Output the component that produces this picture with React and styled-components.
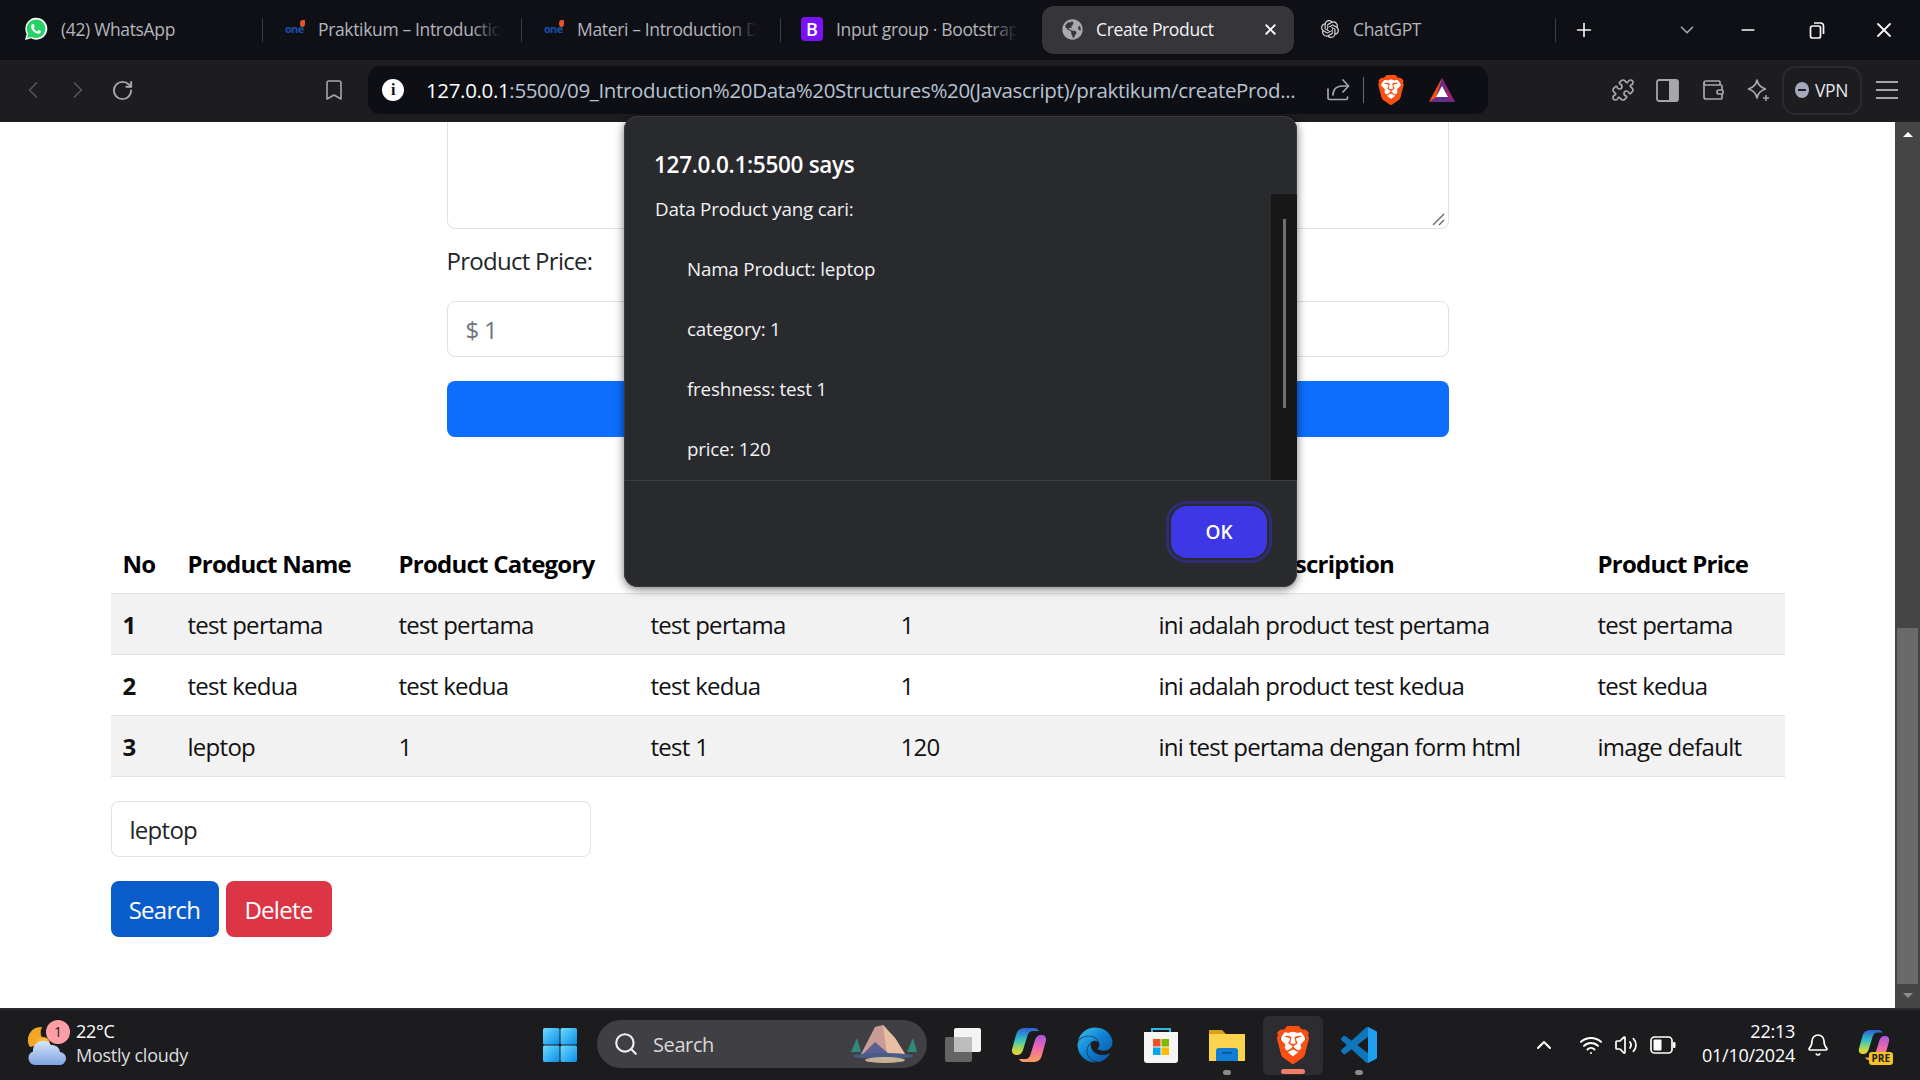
import React from 'react';
import styled, { createGlobalStyle } from 'styled-components';
import {
  ChevronLeft, ChevronRight, RotateCw, Bookmark, Puzzle, Wallet, Plus, ChevronDown,
  Minus, X, Search as SearchIcon, ChevronUp, Wifi, Volume2, Bell,
} from 'lucide-react';
import { FaGlobeAmericas, FaEdge } from 'react-icons/fa';
import { SiOpenai, SiBrave } from 'react-icons/si';

const SANS = '"Open Sans", "Noto Sans", "Liberation Sans", sans-serif';

const Global = createGlobalStyle`
  html, body { margin: 0; padding: 0; width: 1920px; height: 1080px; overflow: hidden; background: #fff; }
  * { box-sizing: border-box; }
  body { font-family: ${SANS}; }
`;

const Root = styled.div`
  position: relative;
  width: 1920px;
  height: 1080px;
  display: flex;
  flex-direction: column;
  overflow: hidden;
`;
const HiddenDefs = styled.svg`
  position: absolute;
  width: 0;
  height: 0;
`;

/* ---------- tab strip ---------- */
const TabStrip = styled.div`
  height: 60px;
  background: #0f1016;
  display: flex;
  align-items: center;
  padding-left: 4px;
  color: #b4b5bb;
  font-size: 17.5px;
  letter-spacing: -0.35px;
`;
const Tab = styled.div`
  flex: 0 0 ${p => p.$w}px;
  height: 44px;
  padding-bottom: 2px;
  display: flex;
  align-items: center;
  gap: ${p => p.$gap || 13}px;
  padding-left: 20px;
  white-space: nowrap;
  svg { flex: none; }
`;
const TabSep = styled.span`
  flex: 0 0 1px;
  height: 24px;
  background: #3c3d42;
`;
const FadedLabel = styled.span`
  position: relative;
  &::after {
    content: '';
    position: absolute;
    right: 0;
    top: 0;
    bottom: 0;
    width: 30px;
    background: linear-gradient(90deg, rgba(15,16,22,0), #0f1016 95%);
  }
`;
const ActiveTab = styled.div`
  flex: 0 0 252px;
  height: 48px;
  margin: 0 7px 0 3px;
  padding: 0 15px 2px 20px;
  background: #35353a;
  border-radius: 12px;
  display: flex;
  align-items: center;
  gap: 13px;
  color: #f3f3f5;
`;
const ActiveLabel = styled.span`
  flex: 1;
`;
const CloseGlyph = styled(X)`
  width: 17px;
  height: 17px;
  color: #fff;
  stroke-width: 2.5;
`;
const OneLogo = styled.span`
  position: relative;
  flex: 0 0 22px;
  padding-left: 2px;
  font: 700 11px/12px ${SANS};
  letter-spacing: -0.7px;
  color: #1c4fa8;
  &::after {
    content: '';
    position: absolute;
    top: -3px;
    right: 0;
    width: 5px;
    height: 7px;
    background: #e8532a;
    border-radius: 50% 10% 50% 50%;
  }
`;
const BootstrapLogo = styled.span`
  flex: 0 0 22px;
  height: 24px;
  border-radius: 4px;
  background: #7b12f5;
  color: #fff;
  font: 600 18px/24px ${SANS};
  text-align: center;
  letter-spacing: 0;
`;
const GptLogo = styled.span`
  flex: 0 0 18px;
  display: flex;
  color: #d8d8da;
`;
const WindowControls = styled.div`
  display: flex;
  align-items: center;
  color: #f2f2f2;
`;
const StripButton = styled.span`
  width: ${p => p.$w}px;
  margin-left: ${p => p.$ml || 0}px;
  display: flex;
  justify-content: center;
  color: ${p => p.$c || '#f5f5f5'};
`;

/* ---------- tool bar ---------- */
const ToolBar = styled.div`
  height: 62px;
  padding: 0 0 2px 11px;
  background: #1c1c21;
  display: flex;
  align-items: center;
  color: #a6a7ad;
`;
const NavButton = styled.span`
  flex: 0 0 ${p => p.$w}px;
  display: flex;
  justify-content: center;
  color: ${p => p.$c || '#a6a7ad'};
`;
const BookmarkSlot = styled.span`
  flex: 0 0 209px;
  display: flex;
  justify-content: flex-end;
  padding-right: 7px;
`;
const AddressBar = styled.div`
  flex: 0 0 1120px;
  height: 48px;
  margin-left: 15px;
  padding-left: 14px;
  background: #0e0f14;
  border-radius: 12px;
  display: flex;
  align-items: center;
  color: #b6c3d2;
  font-size: 20.5px;
  letter-spacing: -0.35px;
  white-space: nowrap;
`;
const InfoDot = styled.span`
  flex: 0 0 22px;
  height: 22px;
  margin-right: 22px;
  border-radius: 50%;
  background: #fff;
  color: #0e0f14;
  font: 700 16px/22px "Liberation Serif", serif;
  text-align: center;
`;
const Host = styled.span`
  color: #fff;
`;
const Url = styled.span`
  flex: 0 0 896px;
`;
const AddrSep = styled.span`
  flex: 0 0 1px;
  height: 26px;
  margin: 0 12px 0 9px;
  background: #6a6b70;
`;
const BraveMark = styled.span`
  position: relative;
  flex: 0 0 ${p => p.$s}px;
  width: ${p => p.$s}px;
  height: ${p => p.$s}px;
  display: flex;
  color: #fb4f14;
  &::before {
    content: '';
    position: absolute;
    inset: 14% 18% 16%;
    background: #fff;
    border-radius: 30%;
  }
  svg { position: relative; }
`;
const Extensions = styled.div`
  display: flex;
  align-items: center;
  margin-left: 112px;
`;
const VpnPill = styled.span`
  flex: 0 0 80px;
  height: 49px;
  margin-left: 2px;
  padding-left: 11px;
  border: 2px solid #2b2c31;
  border-radius: 14px;
  display: flex;
  align-items: center;
  gap: 6px;
  color: #e8e8ea;
  font-size: 17.5px;
  letter-spacing: -0.4px;
`;
const VpnDot = styled.span`
  position: relative;
  width: 14px;
  height: 16px;
  border-radius: 50%;
  background: #a5a8bb;
  &::after {
    content: '';
    position: absolute;
    left: 3px;
    right: 3px;
    top: 7px;
    height: 2px;
    background: #1c1c21;
  }
`;

/* ---------- page ---------- */
const Viewport = styled.div`
  flex: 0 0 886px;
  display: flex;
  overflow: hidden;
`;
const Page = styled.main`
  flex: 1;
  background: #fff;
  color: #212529;
  font-size: 24px;
  letter-spacing: -0.72px;
  overflow: hidden;
`;
const Form = styled.div`
  width: 1002px;
  margin: 0 auto;
`;
const ClippedArea = styled.div`
  position: relative;
  height: 107px;
  border: 1px solid #dee2e6;
  border-top: 0;
  border-radius: 0 0 8px 8px;
`;
const ResizeGrip = styled.svg`
  position: absolute;
  right: 2px;
  bottom: 2px;
  width: 14px;
  height: 14px;
`;
const Label = styled.div`
  margin-top: 15px;
  height: 36px;
  line-height: 34px;
`;
const Field = styled.div`
  height: 56px;
  margin-top: ${p => p.$mt}px;
  width: ${p => p.$w || '100%'};
  border: 1px solid #dee2e6;
  border-radius: 8px;
  padding: 0 18px;
  line-height: 56px;
  color: ${p => p.$c || '#212529'};
`;
const SubmitBar = styled.div`
  height: 56px;
  margin-top: 24px;
  background: #0d6efd;
  border-radius: 8px;
`;
const Lower = styled.section`
  width: 1674px;
  margin: 95px auto 0;
`;
const Table = styled.table`
  width: 1674px;
  table-layout: fixed;
  border-collapse: collapse;
`;
const Th = styled.th`
  height: 61px;
  padding: 2px 12px 0;
  text-align: left;
  font-weight: 700;
  letter-spacing: -0.76px;
  color: #000;
  border-bottom: 1px solid #dee2e6;
  white-space: nowrap;
`;
const Row = styled.tr`
  background: ${p => (p.$odd ? '#f2f2f2' : '#fff')};
`;
const Td = styled.td`
  height: 61px;
  padding: 2px 12px 0;
  color: #111;
  font-weight: ${p => (p.$b ? 700 : 400)};
  border-bottom: 1px solid #dee2e6;
  white-space: nowrap;
`;
const ActionRow = styled.div`
  display: flex;
  gap: 7px;
  margin-top: 24px;
`;
const ActionButton = styled.div`
  width: ${p => p.$w}px;
  height: 56px;
  background: ${p => p.$bg};
  border-radius: 8px;
  color: #fff;
  text-align: center;
  line-height: 58px;
`;

/* ---------- page scrollbar ---------- */
const ScrollTrack = styled.div`
  flex: 0 0 25px;
  background: #454545;
  display: flex;
  flex-direction: column;
  align-items: center;
  padding: 0 2px;
`;
const Arrow = styled.span`
  margin-top: ${p => p.$mt}px;
  width: 0;
  height: 0;
  border-left: 5px solid transparent;
  border-right: 5px solid transparent;
  ${p => (p.$down ? `border-top: 5px solid #8e8e8e;` : `border-bottom: 5px solid #fff;`)}
`;
const ScrollThumb = styled.div`
  width: 21px;
  height: 356px;
  margin-top: ${p => p.$mt}px;
  background: #6a6a6a;
`;

/* ---------- alert dialog ---------- */
const Dialog = styled.div`
  position: absolute;
  left: 624px;
  top: 116px;
  width: 673px;
  height: 471px;
  background: #292a2d;
  border-radius: 14px;
  box-shadow: 0 2px 10px rgba(0,0,0,.55), 0 0 0 1px #3a3b3f inset;
  color: #f2f2f4;
  display: flex;
  flex-direction: column;
  overflow: hidden;
`;
const DialogTitle = styled.div`
  flex: 0 0 78px;
  padding: 34px 0 0 30px;
  font-size: 22.5px;
  line-height: 30px;
  font-weight: 600;
  letter-spacing: -0.3px;
  color: #fff;
`;
const DialogBody = styled.div`
  flex: 0 0 286px;
  min-height: 0;
  display: flex;
  overflow: hidden;
`;
const Message = styled.div`
  flex: 1;
  padding-left: 31px;
  font-size: 18.8px;
  letter-spacing: -0.2px;
`;
const Line = styled.div`
  height: 60px;
  line-height: 30px;
  padding-left: ${p => (p.$in ? 32 : 0)}px;
`;
const DialogScroll = styled.div`
  flex: 0 0 26px;
  background: #181818;
  display: flex;
  justify-content: center;
  padding-top: 25px;
`;
const DialogThumb = styled.div`
  width: 3px;
  height: 189px;
  background: #6f6f6f;
`;
const DialogFooter = styled.div`
  flex: 1;
  border-top: 1px solid #3c3d41;
  display: flex;
  justify-content: flex-end;
  align-items: center;
  padding: 0 30px 4px 0;
`;
const OkButton = styled.div`
  width: 96px;
  height: 52px;
  background: #3d37e6;
  border-radius: 16px;
  box-shadow: 0 0 0 2px #292a2d, 0 0 0 5px #2f2e75;
  color: #fff;
  font-weight: 600;
  font-size: 19px;
  text-align: center;
  line-height: 52px;
`;

/* ---------- taskbar ---------- */
const TaskBar = styled.footer`
  flex: 0 0 72px;
  background: #1c1c1f;
  border-top: 2px solid #2c2c2e;
  display: flex;
  align-items: center;
  color: #fff;
  font-size: 18px;
  letter-spacing: -0.25px;
`;
const Weather = styled.div`
  position: relative;
  flex: 0 0 527px;
  display: flex;
  align-items: center;
  padding-left: 28px;
  gap: 10px;
  svg { flex: none; }
`;
const WeatherBadge = styled.span`
  position: absolute;
  left: 46px;
  top: -3px;
  width: 24px;
  height: 24px;
  border-radius: 50%;
  background: #ff9ea6;
  color: #222;
  font-size: 14px;
  line-height: 24px;
  text-align: center;
`;
const WeatherText = styled.div`
  line-height: 24px;
  margin-top: -4px;
`;
const Dim = styled.div`
  color: #dedede;
`;
const Slot = styled.div`
  position: relative;
  flex: 0 0 66px;
  height: 59px;
  display: flex;
  align-items: center;
  justify-content: center;
  ${p => p.$active && `
    &::before {
      content: '';
      position: absolute;
      inset: 0 3px;
      background: #2d2d31;
      border-radius: 6px;
    }
  `}
`;
const Dot = styled.span`
  position: absolute;
  left: 50%;
  bottom: ${p => (p.$wide ? 1 : 0)}px;
  width: ${p => (p.$wide ? 24 : 8)}px;
  height: 5px;
  margin-left: ${p => (p.$wide ? -12 : -4)}px;
  border-radius: 3px;
  background: ${p => (p.$wide ? '#f47c6a' : '#8a8a8a')};
`;
const SearchPill = styled.div`
  flex: 0 0 330px;
  height: 48px;
  margin: -2px 3px 0 4px;
  padding: 0 6px 0 16px;
  background: #3f3f44;
  border-radius: 24px;
  display: flex;
  align-items: center;
  gap: 14px;
  color: #d9d9d9;
  font-size: 20px;
  letter-spacing: -0.4px;
`;
const SearchText = styled.span`
  flex: 1;
`;
const Tray = styled.div`
  flex: 1;
  display: flex;
  align-items: center;
  padding-left: 135px;
`;
const TrayIcon = styled.span`
  position: relative;
  flex: 0 0 ${p => p.$w}px;
  margin-left: ${p => p.$ml || 0}px;
  display: flex;
  justify-content: center;
`;
const PreBadge = styled.span`
  position: absolute;
  right: 14px;
  bottom: -4px;
  padding: 0 3px;
  border-radius: 3px;
  background: #f7c325;
  color: #222;
  font: 700 10px/13px ${SANS};
  letter-spacing: 0;
`;
const Clock = styled.div`
  flex: 0 0 104px;
  margin: -4px 0 0 6px;
  text-align: right;
  line-height: 24px;
`;

/* ---------- drawings ---------- */
const WhatsAppIcon = () => (
  <svg width="24" height="24" viewBox="0 0 24 24">
    <path fill="#fff" d="M1 23l1.7-6A11 11 0 1 1 7 21.3z" />
    <path fill="#25d366" d="M3 21l1.2-4.3a9.3 9.3 0 1 1 3.4 3.2z" />
    <path fill="#fff" d="M9 7c-.4 0-.9.2-1.2.6-.5.6-.9 1.3-.8 2.3.2 1.5 1.2 3.1 2.7 4.5 1.5 1.3 3 2.2 4.4 2.3 1 .1 1.8-.3 2.4-1 .3-.4.5-1 .4-1.4l-2.3-1.2-1.1 1.3c-1.6-.6-3-1.9-3.8-3.5l1-1.2L9.7 7z" />
  </svg>
);
const Grip = () => (
  <ResizeGrip viewBox="0 0 14 14">
    <path d="M1 13 12 2M7 13l5-5" stroke="#666" strokeWidth="1.4" fill="none" />
  </ResizeGrip>
);
const ShareIcon = () => (
  <svg width="24" height="24" viewBox="0 0 24 24" fill="none" stroke="#a6a7ad" strokeWidth="1.7" strokeLinecap="round" strokeLinejoin="round">
    <path d="M2 11v9a1.500 1.500 0 0 0 1.500 1.500H20a1.500 1.500 0 0 0 1.500-1.500v-1" />
    <path d="M7 17c0-6 4-9 10-9h5" />
    <path d="M17 2l5.500 6L17 14" />
  </svg>
);
const BatIcon = () => (
  <svg width="28" height="26" viewBox="0 0 28 26">
    <polygon points="14,1 1,25 27,25" fill="#662d91" />
    <polygon points="14,1 1,25 8,20" fill="#ff5000" />
    <polygon points="14,1 27,25 20,20" fill="#9e1f63" />
    <polygon points="14,9 8,20 20,20" fill="#fff" />
  </svg>
);
const SidebarIcon = () => (
  <svg width="23" height="23" viewBox="0 0 23 23">
    <rect x="1" y="1" width="21" height="21" rx="2" fill="none" stroke="#a6a7ad" strokeWidth="1.8" />
    <rect x="13" y="1" width="9" height="21" fill="#a6a7ad" />
  </svg>
);
const LeoIcon = () => (
  <svg width="24" height="24" viewBox="0 0 24 24" fill="none" stroke="#a6a7ad" strokeWidth="1.7" strokeLinejoin="round">
    <path d="M11 2c1 5 3.500 7.500 8.500 9-5 1.500-7.500 4-8.500 9-1-5-3.500-7.500-8.500-9 5-1.500 7.500-4 8.500-9z" />
    <path d="M20 17v6M17 20h6" strokeWidth="1.500" />
  </svg>
);
const MenuIcon = () => (
  <svg width="22" height="20" viewBox="0 0 22 20">
    <path d="M0 2h22M0 10h22M0 18h22" stroke="#a6a7ad" strokeWidth="2" />
  </svg>
);
const RestoreIcon = () => (
  <svg width="16" height="17" viewBox="0 0 16 17" fill="none" stroke="#f5f5f5" strokeWidth="1.700">
    <rect x="1.500" y="4" width="10" height="12" rx="2" />
    <path d="M5 1h6.500a3 3 0 0 1 3 3v8" />
  </svg>
);
const WindowsIcon = () => (
  <svg width="36" height="36" viewBox="0 0 36 36">
    <defs>
      <linearGradient id="winGrad" x1="0" y1="0" x2="1" y2="1">
        <stop offset="0" stopColor="#6ddcff" />
        <stop offset="1" stopColor="#0a8de8" />
      </linearGradient>
    </defs>
    <rect x="1" y="1" width="16.500" height="16.500" rx="1.500" fill="url(#winGrad)" />
    <rect x="18.500" y="1" width="16.500" height="16.500" rx="1.500" fill="url(#winGrad)" />
    <rect x="1" y="18.500" width="16.500" height="16.500" rx="1.500" fill="url(#winGrad)" />
    <rect x="18.500" y="18.500" width="16.500" height="16.500" rx="1.500" fill="url(#winGrad)" />
  </svg>
);
const WeatherIcon = () => (
  <svg width="38" height="44" viewBox="0 0 38 44">
    <defs>
      <linearGradient id="cloudGrad" x1="0" y1="0" x2="0" y2="1">
        <stop offset="0" stopColor="#d6e5fa" />
        <stop offset="1" stopColor="#7fa3e0" />
      </linearGradient>
    </defs>
    <path d="M14 4a12 12 0 0 0 5 16L2 24A13 13 0 0 1 14 4z" fill="#f5a623" />
    <circle cx="15" cy="21" r="7" fill="#f9b53a" />
    <path fill="url(#cloudGrad)" d="M7 42a7 7 0 0 1-2-13.500A10 10 0 0 1 23 22a8 8 0 0 1 9 7A6.500 6.500 0 0 1 31 42z" />
  </svg>
);
const MountainIcon = () => (
  <svg width="76" height="40" viewBox="0 0 76 40">
    <polygon points="6,28 12,14 16,28" fill="#2e8b7a" />
    <polygon points="62,28 68,14 72,28" fill="#2e8b7a" />
    <polygon points="16,30 30,3 38,1 50,14 60,30" fill="#c99c96" />
    <polygon points="38,1 50,14 60,30 42,30" fill="#e8bfa2" />
    <polygon points="18,30 30,18 44,30" fill="#5b5f92" />
    <ellipse cx="38" cy="32" rx="30" ry="3" fill="#4a5c86" />
    <ellipse cx="40" cy="36" rx="20" ry="3" fill="#e8cfa8" opacity=".8" />
  </svg>
);
const TaskViewIcon = () => (
  <svg width="38" height="36" viewBox="0 0 38 36">
    <rect x="10" y="1" width="27" height="24" rx="2" fill="#f4f4f4" />
    <rect x="1" y="10" width="27" height="25" rx="2" fill="#6a6a6a" opacity=".92" />
    <rect x="10" y="10" width="18" height="15" fill="#bdbdbd" />
  </svg>
);
const CopilotIcon = ({ s = 36, id = 'co' }) => (
  <svg width={s} height={s} viewBox="0 0 36 36">
    <defs>
      <linearGradient id={`${id}A`} x1="0" y1="0" x2="0" y2="1">
        <stop offset="0" stopColor="#2b5fd8" />
        <stop offset=".45" stopColor="#35c4c0" />
        <stop offset=".8" stopColor="#b8d84a" />
        <stop offset="1" stopColor="#f0d23c" />
      </linearGradient>
      <linearGradient id={`${id}B`} x1="0" y1="1" x2="0" y2="0">
        <stop offset="0" stopColor="#f7a05a" />
        <stop offset=".5" stopColor="#f06aa8" />
        <stop offset="1" stopColor="#a855e0" />
      </linearGradient>
    </defs>
    <path fill={`url(#${id}A)`} d="M14 1h9c2.500 0 4 1 5 3h-6c-3 0-4.500 1.500-5.500 4.500L12 23c-1 3-3 5-6 5H5c-3 0-4.500-2.500-4-5.500L5 8C6 3.500 9 1 14 1z" />
    <path fill={`url(#${id}B)`} d="M22 35h-9c-2.500 0-4-1-5-3h6c3 0 4.500-1.500 5.500-4.500L24 13c1-3 3-5 6-5h1c3 0 4.500 2.500 4 5.500L31 28c-1 4.500-4 7-9 7z" />
  </svg>
);
const StoreIcon = () => (
  <svg width="36" height="38" viewBox="0 0 36 38">
    <path d="M9 8V3h18v5" fill="none" stroke="#35b4e8" strokeWidth="2" />
    <path d="M1 6h34v28a3 3 0 0 1-3 3H4a3 3 0 0 1-3-3z" fill="#f5f5f5" />
    <rect x="10" y="13" width="7.500" height="7.500" fill="#f25022" />
    <rect x="18.500" y="13" width="7.500" height="7.500" fill="#7fba00" />
    <rect x="10" y="21.500" width="7.500" height="7.500" fill="#00a4ef" />
    <rect x="18.500" y="21.500" width="7.500" height="7.500" fill="#ffb900" />
  </svg>
);
const FolderIcon = () => (
  <svg width="38" height="34" viewBox="0 0 38 34">
    <path d="M1 2h13l4 4h19v6H1z" fill="#d99f17" />
    <path d="M1 6h36v27H1z" fill="#fcd34d" />
    <path d="M8 23a3 3 0 0 1 3-3h16a3 3 0 0 1 3 3v10H8z" fill="#0f7ed4" />
    <rect x="14" y="24" width="10" height="1.600" fill="#08508f" />
  </svg>
);
const VsCodeIcon = () => (
  <svg width="36" height="36" viewBox="0 0 100 100">
    <path fill="#0f76bb" d="M96.460 10.800 75.860.9a6.230 6.230 0 0 0-7.100 1.200L29.300 38.100 12.100 25.100a4.160 4.160 0 0 0-5.300.2l-5.500 5a4.160 4.160 0 0 0 0 6.200L16.200 50 1.300 63.500a4.160 4.160 0 0 0 0 6.200l5.500 5a4.160 4.160 0 0 0 5.300.2l17.200-13 39.400 36a6.230 6.230 0 0 0 7.100 1.200l20.600-9.900a6.240 6.240 0 0 0 3.500-5.600V16.400a6.240 6.240 0 0 0-3.500-5.600zM75 72.700 45.100 50 75 27.300z" />
    <path fill="#1fa0ef" d="M75 0 96.500 10.800A6.240 6.240 0 0 1 100 16.400v67.200a6.240 6.240 0 0 1-3.500 5.600L75 100z" />
  </svg>
);
const BatteryIcon = () => (
  <svg width="26" height="18" viewBox="0 0 26 18">
    <rect x="1" y="1" width="21" height="16" rx="3.500" fill="none" stroke="#fff" strokeWidth="1.700" />
    <rect x="3.500" y="3.500" width="8" height="11" rx="1" fill="#fff" />
    <rect x="23" y="6" width="2.500" height="6" rx="1" fill="#fff" />
  </svg>
);

const HEAD = ['No', 'Product Name', 'Product Category', 'Product Freshness', 'Random Number', 'Products Description', 'Product Price'];
const COLS = [65, 211, 252, 250, 258, 439, 199];
const ROWS = [
  ['1', 'test pertama', 'test pertama', 'test pertama', '1', 'ini adalah product test pertama', 'test pertama'],
  ['2', 'test kedua', 'test kedua', 'test kedua', '1', 'ini adalah product test kedua', 'test kedua'],
  ['3', 'leptop', '1', 'test 1', '120', 'ini test pertama dengan form html', 'image default'],
];

export default function App() {
  return (
    <Root>
      <Global />
      <HiddenDefs>
        <defs>
          <linearGradient id="edgeGrad" x1="0" y1="0" x2="1" y2="1">
            <stop offset="0" stopColor="#35c1f1" />
            <stop offset=".5" stopColor="#0f7fd0" />
            <stop offset="1" stopColor="#0c4f9e" />
          </linearGradient>
        </defs>
      </HiddenDefs>

      <TabStrip>
        <Tab $w={258}><WhatsAppIcon /><span>(42) WhatsApp</span></Tab>
        <TabSep />
        <Tab $w={258}><OneLogo>one</OneLogo><FadedLabel>Praktikum – Introductio</FadedLabel></Tab>
        <TabSep />
        <Tab $w={258}><OneLogo>one</OneLogo><FadedLabel>Materi – Introduction D</FadedLabel></Tab>
        <TabSep />
        <Tab $w={258}><BootstrapLogo>B</BootstrapLogo><FadedLabel>Input group · Bootstrap</FadedLabel></Tab>
        <ActiveTab>
          <FaGlobeAmericas size={21} color="#a9a9ae" />
          <ActiveLabel>Create Product</ActiveLabel>
          <CloseGlyph />
        </ActiveTab>
        <Tab $w={254} $gap={14}><GptLogo><SiOpenai size={18} /></GptLogo><span>ChatGPT</span></Tab>
        <TabSep />
        <WindowControls>
          <StripButton $w={56}><Plus size={22} strokeWidth={1.8} /></StripButton>
          <StripButton $w={50} $ml={50} $c="#a6a7ad"><ChevronDown size={22} strokeWidth={1.8} /></StripButton>
          <StripButton $w={72}><Minus size={20} strokeWidth={2} /></StripButton>
          <StripButton $w={66}><RestoreIcon /></StripButton>
          <StripButton $w={68}><X size={24} strokeWidth={1.8} /></StripButton>
        </WindowControls>
      </TabStrip>

      <ToolBar>
        <NavButton $w={44} $c="#55565c"><ChevronLeft size={28} strokeWidth={1.5} /></NavButton>
        <NavButton $w={45} $c="#55565c"><ChevronRight size={28} strokeWidth={1.5} /></NavButton>
        <NavButton $w={44}><RotateCw size={23} strokeWidth={2} /></NavButton>
        <BookmarkSlot><Bookmark size={24} strokeWidth={1.6} /></BookmarkSlot>
        <AddressBar>
          <InfoDot>i</InfoDot>
          <Url><Host>127.0.0.1</Host>:5500/09_Introduction%20Data%20Structures%20(Javascript)/praktikum/createProd...</Url>
          <NavButton $w={32}><ShareIcon /></NavButton>
          <AddrSep />
          <BraveMark $s={30}><SiBrave size={30} /></BraveMark>
          <NavButton $w={72}><BatIcon /></NavButton>
        </AddressBar>
        <Extensions>
          <NavButton $w={45}><Puzzle size={24} strokeWidth={1.7} /></NavButton>
          <NavButton $w={45}><SidebarIcon /></NavButton>
          <NavButton $w={45}><Wallet size={24} strokeWidth={1.7} /></NavButton>
          <NavButton $w={45}><LeoIcon /></NavButton>
          <VpnPill><VpnDot /><span>VPN</span></VpnPill>
          <NavButton $w={50}><MenuIcon /></NavButton>
        </Extensions>
      </ToolBar>

      <Viewport>
        <Page>
          <Form>
            <ClippedArea><Grip /></ClippedArea>
            <Label>Product Price:</Label>
            <Field $mt={21} $c="#6c757d">$ 1</Field>
            <SubmitBar />
          </Form>
          <Lower>
            <Table>
              <colgroup>
                {COLS.map((w, i) => <col key={i} width={w} />)}
              </colgroup>
              <thead>
                <tr>{HEAD.map(h => <Th key={h}>{h}</Th>)}</tr>
              </thead>
              <tbody>
                {ROWS.map((r, i) => (
                  <Row key={r[0]} $odd={i % 2 === 0}>
                    {r.map((c, j) => <Td key={j} $b={j === 0}>{c}</Td>)}
                  </Row>
                ))}
              </tbody>
            </Table>
            <Field $mt={24} $w="480px">leptop</Field>
            <ActionRow>
              <ActionButton $w={108} $bg="#0b5ccb">Search</ActionButton>
              <ActionButton $w={106} $bg="#dc3545">Delete</ActionButton>
            </ActionRow>
          </Lower>
        </Page>
        <ScrollTrack>
          <Arrow $mt={10} />
          <ScrollThumb $mt={491} />
          <Arrow $down $mt={9} />
        </ScrollTrack>
      </Viewport>

      <TaskBar>
        <Weather>
          <WeatherIcon />
          <WeatherBadge>1</WeatherBadge>
          <WeatherText>
            <div>22°C</div>
            <Dim>Mostly cloudy</Dim>
          </WeatherText>
        </Weather>
        <Slot><WindowsIcon /></Slot>
        <SearchPill>
          <SearchIcon size={26} strokeWidth={2} color="#eee" />
          <SearchText>Search</SearchText>
          <MountainIcon />
        </SearchPill>
        <Slot><TaskViewIcon /></Slot>
        <Slot><CopilotIcon /></Slot>
        <Slot><FaEdge size={36} fill="url(#edgeGrad)" /></Slot>
        <Slot><StoreIcon /></Slot>
        <Slot><FolderIcon /><Dot /></Slot>
        <Slot $active><BraveMark $s={38}><SiBrave size={38} /></BraveMark><Dot $wide /></Slot>
        <Slot><VsCodeIcon /><Dot /></Slot>
        <Tray>
          <TrayIcon $w={34}><ChevronUp size={24} strokeWidth={2} /></TrayIcon>
          <TrayIcon $w={40} $ml={10}><Wifi size={24} strokeWidth={2} /></TrayIcon>
          <TrayIcon $w={30}><Volume2 size={24} strokeWidth={1.7} /></TrayIcon>
          <TrayIcon $w={44}><BatteryIcon /></TrayIcon>
          <Clock>
            <div>22:13</div>
            <div>01/10/2024</div>
          </Clock>
          <TrayIcon $w={46}><Bell size={24} strokeWidth={1.7} /></TrayIcon>
          <TrayIcon $w={66}><CopilotIcon s={32} id="cp" /><PreBadge>PRE</PreBadge></TrayIcon>
        </Tray>
      </TaskBar>

      <Dialog>
        <DialogTitle>127.0.0.1:5500 says</DialogTitle>
        <DialogBody>
          <Message>
            <Line>Data Product yang cari:</Line>
            <Line $in>Nama Product: leptop</Line>
            <Line $in>category: 1</Line>
            <Line $in>freshness: test 1</Line>
            <Line $in>price: 120</Line>
          </Message>
          <DialogScroll><DialogThumb /></DialogScroll>
        </DialogBody>
        <DialogFooter><OkButton>OK</OkButton></DialogFooter>
      </Dialog>
    </Root>
  );
}
